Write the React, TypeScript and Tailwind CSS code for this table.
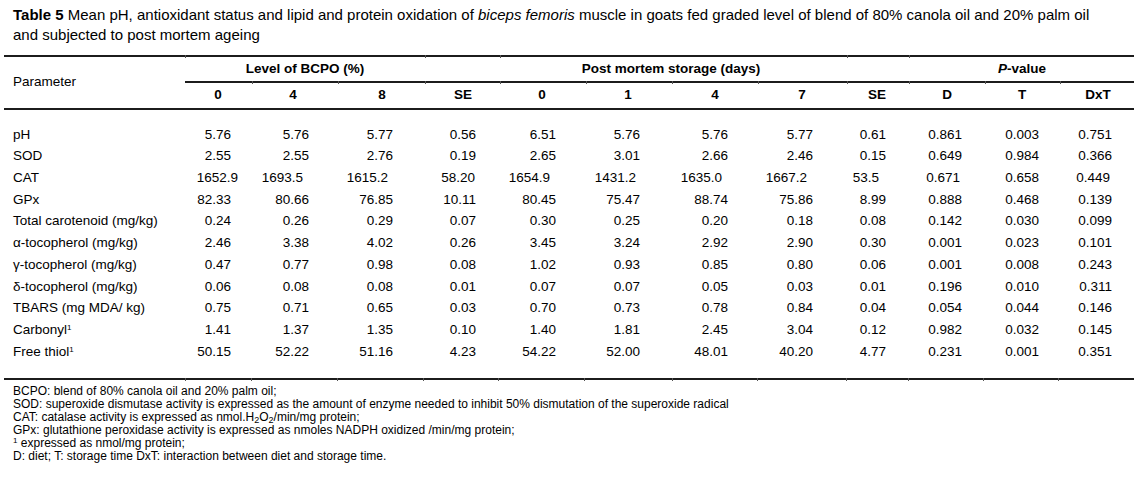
import React from 'react';

type Row = { label: string; sup?: boolean; values: string[] };

const rows: Row[] = [
  { label: 'pH', values: ['5.76', '5.76', '5.77', '0.56', '6.51', '5.76', '5.76', '5.77', '0.61', '0.861', '0.003', '0.751'] },
  { label: 'SOD', values: ['2.55', '2.55', '2.76', '0.19', '2.65', '3.01', '2.66', '2.46', '0.15', '0.649', '0.984', '0.366'] },
  { label: 'CAT', values: ['1652.9', '1693.5', '1615.2', '58.20', '1654.9', '1431.2', '1635.0', '1667.2', '53.5', '0.671', '0.658', '0.449'] },
  { label: 'GPx', values: ['82.33', '80.66', '76.85', '10.11', '80.45', '75.47', '88.74', '75.86', '8.99', '0.888', '0.468', '0.139'] },
  { label: 'Total carotenoid (mg/kg)', values: ['0.24', '0.26', '0.29', '0.07', '0.30', '0.25', '0.20', '0.18', '0.08', '0.142', '0.030', '0.099'] },
  { label: 'α-tocopherol (mg/kg)', values: ['2.46', '3.38', '4.02', '0.26', '3.45', '3.24', '2.92', '2.90', '0.30', '0.001', '0.023', '0.101'] },
  { label: 'γ-tocopherol (mg/kg)', values: ['0.47', '0.77', '0.98', '0.08', '1.02', '0.93', '0.85', '0.80', '0.06', '0.001', '0.008', '0.243'] },
  { label: 'δ-tocopherol (mg/kg)', values: ['0.06', '0.08', '0.08', '0.01', '0.07', '0.07', '0.05', '0.03', '0.01', '0.196', '0.010', '0.311'] },
  { label: 'TBARS (mg MDA/ kg)', values: ['0.75', '0.71', '0.65', '0.03', '0.70', '0.73', '0.78', '0.84', '0.04', '0.054', '0.044', '0.146'] },
  { label: 'Carbonyl', sup: true, values: ['1.41', '1.37', '1.35', '0.10', '1.40', '1.81', '2.45', '3.04', '0.12', '0.982', '0.032', '0.145'] },
  { label: 'Free thiol', sup: true, values: ['50.15', '52.22', '51.16', '4.23', '54.22', '52.00', '48.01', '40.20', '4.77', '0.231', '0.001', '0.351'] },
];

// column cells: values are right aligned at the cell's right edge
const colW = ['w-[46px]', 'w-[78px]', 'w-[84px]', 'w-[83px]', 'w-[80px]', 'w-[84px]', 'w-[88px]', 'w-[85px]', 'w-[73px]', 'w-[76px]', 'w-[77px]', 'w-[73px]'];

// header labels centred in a box that ends at the cell's right edge
const heads = [
  { t: '0', box: 'w-[26px]' },
  { t: '4', box: 'w-[32px]' },
  { t: '8', box: 'w-[22px]' },
  { t: 'SE', box: 'w-[26px]' },
  { t: '0', box: 'w-[28px]' },
  { t: '1', box: 'w-[24px]' },
  { t: '4', box: 'w-[26px]' },
  { t: '7', box: 'w-[22px]' },
  { t: 'SE', box: 'w-[18px]' },
  { t: 'D', box: 'w-[30px]' },
  { t: 'T', box: 'w-[34px]' },
  { t: 'DxT', box: 'w-[28px]' },
];

// the CAT row is set a little off the decimal column in the original
const catShift = ['-mr-[7px]', 'mr-[6px]', 'mr-[5px]', 'mr-[1px]', 'mr-[6px]', 'mr-[4px]', 'mr-[6px]', 'mr-[6px]', 'mr-[7px]', 'mr-[2px]', '', 'mr-[2px]'];

const Rule: React.FC<{ ticks?: number[]; className?: string }> = ({ ticks = [], className = '' }) => (
  <div className={`relative h-[2px] bg-[#1c1c1c] ${className}`}>
    {ticks.map((t) => (
      <span key={t} className="absolute top-0 h-[3px] w-px bg-[#555]" style={{ left: t }} />
    ))}
  </div>
);

export default function App() {
  return (
    <div className="w-[1134px] h-[481px] overflow-hidden bg-white text-black font-['Liberation_Sans',Arial,sans-serif]">
      {/* Caption */}
      <div className="pl-[13px] pt-[5px] text-[15px] leading-[20px] whitespace-nowrap">
        <div>
          <span className="font-bold">Table 5</span> Mean pH, antioxidant status and lipid and protein oxidation of{' '}
          <i>biceps femoris</i> muscle in goats fed graded level of blend of 80% canola oil and 20% palm oil
        </div>
        <div>and subjected to post mortem ageing</div>
      </div>

      {/* Table */}
      <div className="ml-[4px] mt-[10px] text-[13.5px]">
        <Rule ticks={[181, 421, 496, 843, 905]} />

        <div className="flex">
          <div className="w-[181px] flex items-center pl-[9px]">Parameter</div>
          <div className="flex-1 flex flex-col">
            <div className="h-[24px] flex items-center font-bold">
              <div className="w-[240px] flex justify-center">Level of BCPO (%)</div>
              <div className="w-[492px] flex justify-center">Post mortem storage (days)</div>
              <div className="w-[210px] flex justify-center">
                <span>
                  <i>P</i>-value
                </span>
              </div>
            </div>
            <Rule ticks={[67, 153, 240, 315, 401, 487, 573, 662, 724, 800, 875]} />
            <div className="h-[25px] flex items-center font-bold">
              {heads.map((h, i) => (
                <div key={i} className={`${colW[i]} flex justify-end`}>
                  <div className={`${h.box} flex justify-center`}>{h.t}</div>
                </div>
              ))}
            </div>
          </div>
        </div>

        <Rule />

        <div className="pt-[14px] pb-[15px]">
          {rows.map((r) => (
            <div key={r.label} className="h-[21.7px] flex items-center">
              <div className="w-[181px] pl-[9px] whitespace-nowrap">
                {r.label}
                {r.sup && <sup className="text-[8px]">1</sup>}
              </div>
              {r.values.map((v, i) => (
                <div key={i} className={`${colW[i]} flex justify-end`}>
                  <span className={r.label === 'CAT' ? catShift[i] : ''}>{v}</span>
                </div>
              ))}
            </div>
          ))}
        </div>

        <Rule ticks={[181, 247, 333, 419, 494, 580, 668, 753, 842, 904, 979, 1054]} />
      </div>

      {/* Footnotes */}
      <div className="pl-[13px] pt-[5px] text-[12px] leading-[13.1px] whitespace-nowrap">
        <div>BCPO: blend of 80% canola oil and 20% palm oil;</div>
        <div>SOD: superoxide dismutase activity is expressed as the amount of enzyme needed to inhibit 50% dismutation of the superoxide radical</div>
        <div>
          CAT: catalase activity is expressed as nmol.H<sub className="text-[9px]">2</sub>O<sub className="text-[9px]">2</sub>/min/mg protein;
        </div>
        <div>GPx: glutathione peroxidase activity is expressed as nmoles NADPH oxidized /min/mg protein;</div>
        <div>
          <sup className="text-[8px]">1</sup> expressed as nmol/mg protein;
        </div>
        <div>D: diet; T: storage time DxT: interaction between diet and storage time.</div>
      </div>
    </div>
  );
}
